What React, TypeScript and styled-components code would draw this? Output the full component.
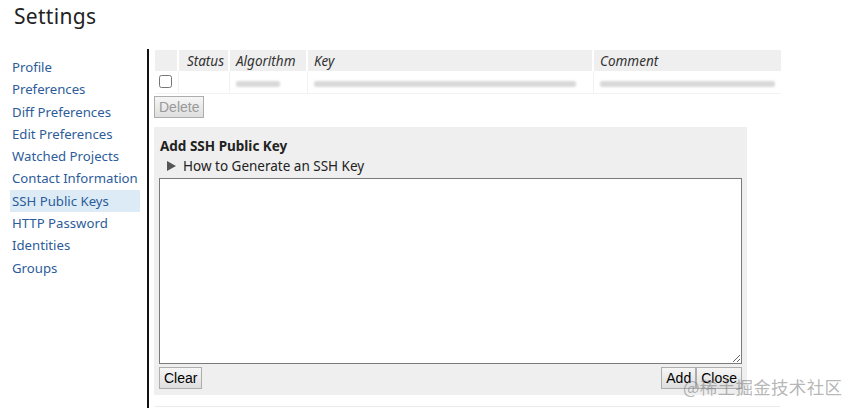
import React from "react";
import styled, { createGlobalStyle } from "styled-components";

const Global = createGlobalStyle`
  html, body { margin: 0; padding: 0; background: #fff; }
  body { font-family: "Noto Sans", "Open Sans", sans-serif; color: #333; }
  * { box-sizing: border-box; }
`;

const Page = styled.div`
  position: relative;
  width: 859px;
  height: 413px;
  overflow: hidden;
`;

const Title = styled.h1`
  margin: 0;
  padding: 2px 0 0 14px;
  height: 48px;
  font-size: 21px;
  font-weight: 400;
  color: #222;
  letter-spacing: 0.3px;
`;

const Body = styled.div`
  display: flex;
  align-items: flex-start;
`;

const Nav = styled.nav`
  width: 147px;
  padding: 8px 7px 0 10px;
  display: flex;
  flex-direction: column;
`;

const NavItem = styled.a<{ $active?: boolean }>`
  display: block;
  height: 22.3px;
  line-height: 22px;
  padding-left: 2px;
  font-size: 13.2px;
  color: #2d5c9a;
  text-decoration: none;
  background: ${(p) => (p.$active ? "#dcebf6" : "transparent")};
  white-space: nowrap;
`;

const Divider = styled.div`
  width: 2px;
  height: 359px;
  margin-top: 1px;
  background: #111;
`;

const Main = styled.div`
  flex: 1;
  padding: 2px 0 0 5px;
  display: flex;
  flex-direction: column;
`;

const Table = styled.table`
  width: 626px;
  margin-left: 1px;
  border-collapse: collapse;
  font-size: 13.5px;
`;

const Th = styled.th<{ $w: number }>`
  width: ${(p) => p.$w}px;
  height: 21px;
  padding: 0 0 0 6px;
  background: #efefef;
  border-left: 2px solid #fff;
  font-style: italic;
  font-weight: 400;
  text-align: left;
  color: #333;
  &:first-child { border-left: none; }
`;

const StatusTh = styled(Th)`
  text-align: right;
  padding-right: 4px;
`;

const Td = styled.td`
  height: 22px;
  padding: 0 0 0 6px;
  border-left: 1px solid #f2f2f2;
  border-bottom: 1px solid #f2f2f2;
  &:first-child { border-left: none; padding-left: 3px; }
`;

const Blur = styled.span<{ $w: number }>`
  display: inline-block;
  width: ${(p) => p.$w}px;
  height: 6px;
  margin-top: 4px;
  border-radius: 2px;
  background: #d9d9d9;
  filter: blur(1px);
`;

const Check = styled.input`
  width: 13px;
  height: 13px;
  margin: 0 0 3px 1px;
  vertical-align: middle;
`;

const Button = styled.button<{ $disabled?: boolean }>`
  height: 22px;
  padding: 0 4px;
  font-family: "Liberation Sans", Arial, sans-serif;
  font-size: 14px;
  color: ${(p) => (p.$disabled ? "#999" : "#000")};
  background: linear-gradient(#f6f6f6, #dedede);
  border: 1px solid #adadad;
  border-radius: 0;
`;

const DeleteRow = styled.div`
  padding-top: 1px;
  height: 33px;
`;

const Panel = styled.section`
  width: 593px;
  height: 268px;
  background: #efefef;
  padding: 9px 5px 0 5px;
  display: flex;
  flex-direction: column;
`;

const PanelTitle = styled.div`
  padding-left: 1px;
  font-size: 13.5px;
  font-weight: 700;
  color: #222;
  height: 20px;
  line-height: 20px;
`;

const Summary = styled.div`
  display: flex;
  align-items: center;
  gap: 7px;
  padding-left: 8px;
  height: 21px;
  font-size: 13.5px;
  color: #222;
`;

const Arrow = styled.span`
  width: 0;
  height: 0;
  border-top: 5px solid transparent;
  border-bottom: 5px solid transparent;
  border-left: 9px solid #555;
`;

const TextArea = styled.textarea`
  width: 583px;
  height: 186px;
  margin-top: 1px;
  border: 1px solid #7a7a7a;
  background: #fff;
  resize: both;
`;

const ButtonRow = styled.div`
  display: flex;
  justify-content: space-between;
  padding-top: 3px;
  width: 583px;
`;

const Group = styled.div`
  display: flex;
`;

const BottomLine = styled.div`
  width: 626px;
  height: 1px;
  margin-top: 11px;
  background: #ececec;
`;

const Watermark = styled.div`
  position: absolute;
  left: 683px;
  top: 374px;
  font-family: "Noto Sans CJK SC", sans-serif;
  font-size: 17.5px;
  color: rgba(120, 120, 120, 0.55);
  letter-spacing: 0.3px;
  pointer-events: none;
`;

const navItems = [
  "Profile",
  "Preferences",
  "Diff Preferences",
  "Edit Preferences",
  "Watched Projects",
  "Contact Information",
  "SSH Public Keys",
  "HTTP Password",
  "Identities",
  "Groups",
];

export default function App() {
  return (
    <Page>
      <Global />
      <Title>Settings</Title>
      <Body>
        <Nav>
          {navItems.map((n) => (
            <NavItem key={n} $active={n === "SSH Public Keys"}>
              {n}
            </NavItem>
          ))}
        </Nav>
        <Divider />
        <Main>
          <Table>
            <thead>
              <tr>
                <Th $w={23}></Th>
                <StatusTh $w={51}>Status</StatusTh>
                <Th $w={78}>Algorithm</Th>
                <Th $w={286}>Key</Th>
                <Th $w={188}>Comment</Th>
              </tr>
            </thead>
            <tbody>
              <tr>
                <Td><Check type="checkbox" /></Td>
                <Td></Td>
                <Td><Blur $w={44} /></Td>
                <Td><Blur $w={262} /></Td>
                <Td><Blur $w={175} /></Td>
              </tr>
            </tbody>
          </Table>
          <DeleteRow>
            <Button $disabled>Delete</Button>
          </DeleteRow>
          <Panel>
            <PanelTitle>Add SSH Public Key</PanelTitle>
            <Summary>
              <Arrow />
              How to Generate an SSH Key
            </Summary>
            <TextArea />
            <ButtonRow>
              <Button>Clear</Button>
              <Group>
                <Button>Add</Button>
                <Button>Close</Button>
              </Group>
            </ButtonRow>
          </Panel>
          <BottomLine />
        </Main>
      </Body>
      <Watermark>@稀土掘金技术社区</Watermark>
    </Page>
  );
}
